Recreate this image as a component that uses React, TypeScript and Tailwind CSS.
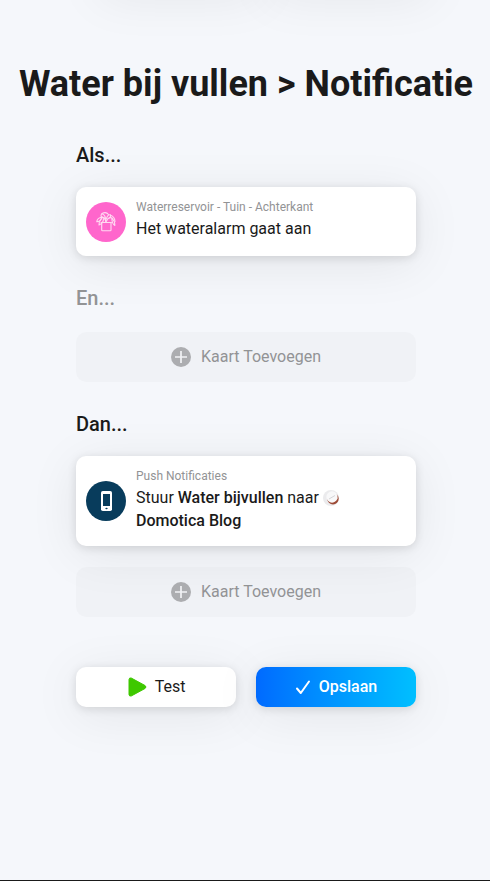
import React from 'react';

const cardShadow = 'shadow-[0_2px_10px_rgba(0,0,0,0.12),0_8px_50px_rgba(0,0,0,0.08)]';

function PlantIcon() {
  return (
    <svg viewBox="0 0 20 20" className="h-5 w-5" fill="none" stroke="#ffd9f1" strokeWidth="1.100" strokeLinecap="round" strokeLinejoin="round">
      <path d="M5 10.500h10.500M5.700 10.500v7.500q0 .8 .8 .8h7.700q.8 0 .8-.8v-7.500" />
      <path d="M10 10.300C9.500 6.500 7.500 5 4.500 5.500C2.500 6 1 8 .8 9.800C3 9.500 5 8 5.500 5.800" />
      <path d="M10 10C10 6 8.500 2.500 5.800 1.800C5 2.500 4.800 3.500 5.200 4.500C7 5.500 8.500 6 9.500 7" />
      <path d="M10.300 7C11 4 12.500 2.500 14.500 2.800C15 4.500 14 6 12 6.500" />
      <path d="M6 1.500C8 .5 11 .5 12.500 2.500M10.500 9C12 6 14.500 4.500 16.500 6.500C18 8.500 19 11 18.800 13.500C17 12.500 16 10 15.800 6.500" />
      <path d="M14.500 3.200C17 4 18.800 6.500 19 9.500" />
      <path d="M5.500 6.500C3.800 8.500 3 11 3 13C5.500 12 7.500 10 7.500 6.800" />
    </svg>
  );
}

function PhoneIcon() {
  return (
    <svg viewBox="0 0 11 20" className="ml-px h-5 w-[11px]">
      <rect width="11" height="20" rx="1.800" fill="#fff" />
      <rect x="2" y="3" width="7" height="12" fill="#083c5c" />
      <ellipse cx="5.500" cy="17.500" rx="1.200" ry=".8" fill="#083c5c" />
    </svg>
  );
}

function BlogAvatar() {
  return (
    <svg viewBox="0 0 16 16" className="inline-block h-4 w-4 align-[-3px]">
      <circle cx="8" cy="8" r="8" fill="#ebebed" />
      <circle cx="10" cy="8.800" r="5.700" fill="#9c4a36" />
      <path d="M4.800 10.500Q9.500 16 14.800 8.500L13 5Z" fill="#e0b7aa" />
      <circle cx="9" cy="6.900" r="5.600" fill="#f8f8f9" />
      <path d="M6 9 12 5.500" stroke="#c4c4c8" strokeWidth=".7" />
    </svg>
  );
}

function AddCardButton({ className }: { className: string }) {
  return (
    <button type="button" className={`flex h-[50px] w-full items-center justify-center gap-2.5 rounded-[10px] bg-black/[0.02] text-base text-[#929395] ${className}`}>
      <svg viewBox="0 0 20 20" className="h-5 w-5">
        <circle cx="10" cy="10" r="10" fill="#acadb0" />
        <path d="M10 4v12M4 10h12" stroke="#f1f2f5" strokeWidth="1.700" />
      </svg>
      Kaart Toevoegen
    </button>
  );
}

interface FlowCardProps {
  icon: React.ReactNode;
  iconBg: string;
  owner: string;
  children: React.ReactNode;
}

function FlowCard({ icon, iconBg, owner, children }: FlowCardProps) {
  return (
    <div className={`mt-5 flex min-h-[69px] items-center gap-2.5 rounded-[10px] bg-white px-2.5 ${cardShadow}`}>
      <div className={`flex h-10 w-10 shrink-0 items-center justify-center rounded-full ${iconBg}`}>{icon}</div>
      <div className="min-w-0 flex-1 self-start pt-3 pb-3.5">
        <p className="text-xs leading-4 text-[#929395]">{owner}</p>
        <p className="mt-0.5 pr-10 text-base leading-[23px]">{children}</p>
      </div>
    </div>
  );
}

export default function App() {
  return (
    <div className="relative min-h-screen overflow-hidden border-b border-[#1a1a1a] bg-[#f5f7fb] pl-0.5 font-[Roboto,sans-serif] text-[#1a1a1a]">
      {/* shadows of the cards just above the fold */}
      <div className="pointer-events-none absolute inset-x-0 -top-[52px] flex justify-center gap-2.5 pl-10" aria-hidden="true">
        <div className={`h-10 w-40 ${cardShadow}`} />
        <div className={`h-10 w-40 ${cardShadow}`} />
      </div>

      <h1 className="pt-[62px] text-center text-4xl leading-[44px] font-bold whitespace-nowrap">Water bij vullen &gt; Notificatie</h1>

      <main className="mx-auto mt-[37px] w-full max-w-[340px]">
        <section>
          <h2 className="text-xl leading-6 font-medium">Als...</h2>
          <FlowCard icon={<PlantIcon />} iconBg="bg-[#ff66cc]" owner="Waterreservoir - Tuin - Achterkant">
            Het wateralarm gaat aan
          </FlowCard>
        </section>

        <section className="mt-[30px]">
          <h2 className="text-xl leading-6 font-medium text-[#929395]">En...</h2>
          <AddCardButton className="mt-[22px]" />
        </section>

        <section className="mt-[30px]">
          <h2 className="text-xl leading-6 font-medium">Dan...</h2>
          <FlowCard icon={<PhoneIcon />} iconBg="bg-[#083c5c]" owner="Push Notificaties">
            Stuur <span className="font-medium">Water bijvullen</span> naar <BlogAvatar />{' '}
            <span className="font-medium">Domotica Blog</span>
          </FlowCard>
          <AddCardButton className="mt-[21px]" />
        </section>

        <div className="mt-[50px] grid grid-cols-2 gap-5">
          <button type="button" className={`flex h-10 items-center justify-center gap-2 rounded-[10px] bg-white text-base ${cardShadow}`}>
            <svg viewBox="0 0 20 20" className="h-5 w-5">
              <path d="M2 2.500v15q.2 2 2.200 1.500L18 11.500q2-1.500 0-3L4.200 1Q2.200.5 2 2.500" fill="#3ec800" stroke="#3ec800" strokeWidth="1" strokeLinejoin="round" />
            </svg>
            Test
          </button>
          <button type="button" className={`flex h-10 items-center justify-center gap-2 rounded-[10px] bg-linear-to-r from-[#006aff] to-[#00bfff] text-base font-medium text-white ${cardShadow}`}>
            <svg viewBox="0 0 16 16" className="h-4 w-4" fill="none" stroke="#fff" strokeWidth="2" strokeLinecap="round" strokeLinejoin="round">
              <path d="M2 9.500 5.800 14 14 2.500" />
            </svg>
            Opslaan
          </button>
        </div>
      </main>
    </div>
  );
}
